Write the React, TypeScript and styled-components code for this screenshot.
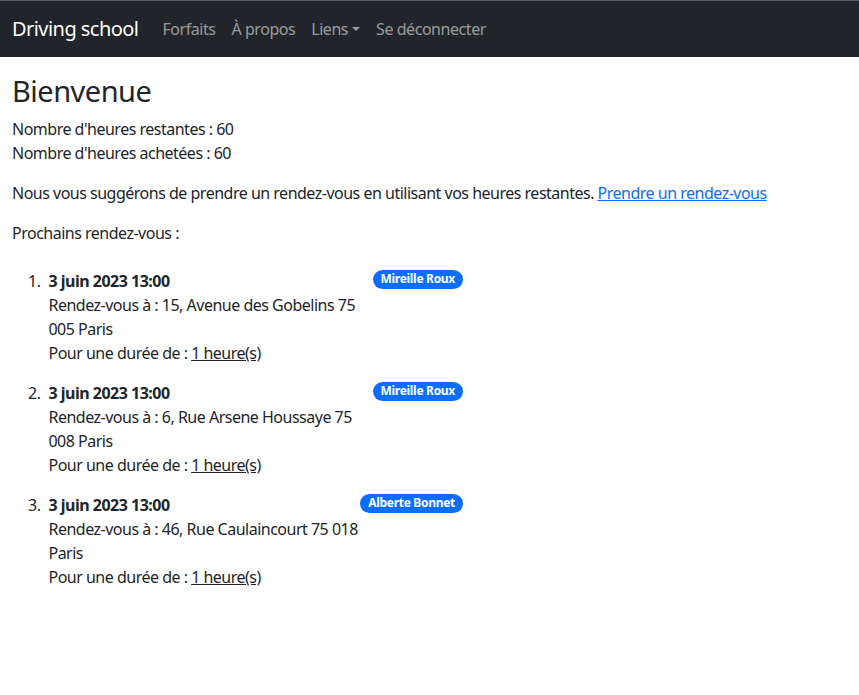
import React from 'react'
import styled, { createGlobalStyle } from 'styled-components'

const GlobalStyle = createGlobalStyle`
  body {
    margin: 0;
    font-family: 'Noto Sans', 'Open Sans', sans-serif;
    font-size: 16px;
    line-height: 1.5;
    letter-spacing: -0.5px;
    color: #212529;
    background: #fff;
  }
`

const Navbar = styled.nav`
  display: flex;
  align-items: center;
  background: #212529;
  border-top: 1px solid #5c5f63;
  padding: 8px 12px;
  height: 57px;
  box-sizing: border-box;
`

const Brand = styled.a`
  font-size: 20px;
  letter-spacing: -0.55px;
  color: #fff;
  margin-right: 16px;
  text-decoration: none;
  padding: 5px 0;
`

const NavLink = styled.a<{ $dropdown?: boolean }>`
  color: rgba(255, 255, 255, 0.55);
  padding: 8px;
  letter-spacing: -0.45px;
  text-decoration: none;
  display: flex;
  align-items: center;

  ${p =>
    p.$dropdown &&
    `
    &::after {
      content: '';
      margin-left: 4px;
      border-top: 4.8px solid;
      border-right: 4.8px solid transparent;
      border-left: 4.8px solid transparent;
    }
  `}
`

const Main = styled.main`
  padding: 17px 12px 0;
`

const Title = styled.h1`
  font-size: 29px;
  font-weight: 400;
  line-height: 1.2;
  margin: 0 0 8px;
`

const Para = styled.p`
  margin: 0 0 16px;
`

const Link = styled.a`
  color: #0d6efd;
  text-decoration: underline;
`

const List = styled.ol`
  list-style: none;
  counter-reset: section;
  margin: 0;
  padding: 0;
  width: 467px;
`

const Item = styled.li`
  display: flex;
  justify-content: space-between;
  align-items: flex-start;
  padding: 8px 16px;

  &::before {
    content: counters(section, '.') '. ';
    counter-increment: section;
  }
`

const Body = styled.div`
  margin-left: 8px;
  margin-right: auto;
  flex: 1;
`

const Date = styled.div`
  font-weight: 700;
`

const Duration = styled.u`
  text-decoration: underline;
`

const Badge = styled.span`
  display: inline-block;
  background: #0d6efd;
  color: #fff;
  font-size: 12px;
  font-weight: 700;
  letter-spacing: -0.3px;
  line-height: 1;
  padding: 3.5px 8px;
  border-radius: 50rem;
  white-space: nowrap;
  margin-top: 1px;
`

const appointments = [
  { date: '3 juin 2023 13:00', address: '15, Avenue des Gobelins 75 005 Paris', teacher: 'Mireille Roux' },
  { date: '3 juin 2023 13:00', address: '6, Rue Arsene Houssaye 75 008 Paris', teacher: 'Mireille Roux' },
  { date: '3 juin 2023 13:00', address: '46, Rue Caulaincourt 75 018 Paris', teacher: 'Alberte Bonnet' },
]

export default function App() {
  return (
    <>
      <GlobalStyle />
      <Navbar>
        <Brand href="#">Driving school</Brand>
        <NavLink href="#">Forfaits</NavLink>
        <NavLink href="#">À propos</NavLink>
        <NavLink href="#" $dropdown>Liens</NavLink>
        <NavLink href="#">Se déconnecter</NavLink>
      </Navbar>
      <Main>
        <Title>Bienvenue</Title>
        <Para>
          Nombre d'heures restantes : 60
          <br />
          Nombre d'heures achetées : 60
        </Para>
        <Para>
          Nous vous suggérons de prendre un rendez-vous en utilisant vos heures restantes.{' '}
          <Link href="#">Prendre un rendez-vous</Link>
        </Para>
        <Para>Prochains rendez-vous :</Para>
        <List>
          {appointments.map((a, i) => (
            <Item key={i}>
              <Body>
                <Date>{a.date}</Date>
                <div>{`Rendez-vous à : ${a.address}`}</div>
                <div>
                  Pour une durée de : <Duration>1 heure(s)</Duration>
                </div>
              </Body>
              <Badge>{a.teacher}</Badge>
            </Item>
          ))}
        </List>
      </Main>
    </>
  )
}
